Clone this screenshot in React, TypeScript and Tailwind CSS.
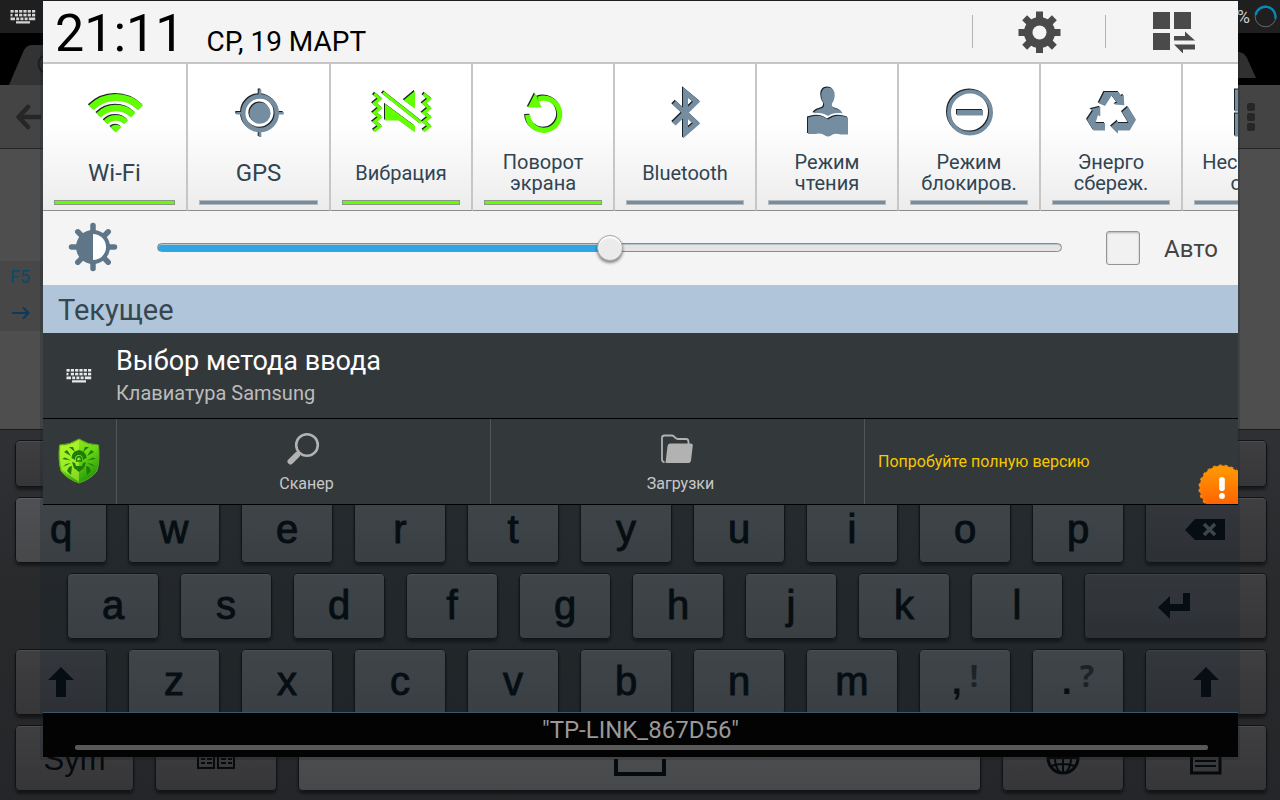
import { useState, type CSSProperties, type ReactNode } from "react";

const KEY_BASE =
  "flex items-center justify-center rounded-[5px] font-['Liberation_Sans',Arial,sans-serif] text-[40px] leading-none text-[#050a0d] shadow-[0_3px_3px_rgba(0,0,0,0.45),inset_0_0_0_1px_#101214,inset_0_2px_0_rgba(255,255,255,0.08)]";
const LIGHT = "bg-linear-to-b from-[#4e5053] to-[#46484a]";
const DARK = "bg-linear-to-b from-[#3f3f42] to-[#363639]";

function Key({ size = "flex-[92_1_0px]", dark = false, label, children }: { size?: string; dark?: boolean; label?: string; children?: ReactNode }) {
  return (
    <button type="button" aria-label={label} className={`${KEY_BASE} ${size} ${dark ? DARK : LIGHT}`}>
      {children}
    </button>
  );
}

function Letter({ char }: { char: string }) {
  return (
    <Key>
      <span className="pb-0.5 [-webkit-text-stroke:1px_#050a0d]">{char}</span>
    </Key>
  );
}

function PunctuationKey({ main, alt }: { main: string; alt: string }) {
  return (
    <Key>
      <span className="flex items-center gap-2">
        <span className="text-[36px] font-bold">{main}</span>
        <span className="pb-3 font-['Open_Sans',sans-serif] text-[30px] font-bold text-[#1f2427]">{alt}</span>
      </span>
    </Key>
  );
}

function ShiftIcon() {
  return (
    <svg width="28" height="32" viewBox="0 0 28 32" fill="#050a0d">
      <path d="M14 1 27 14H19V31H9V14H1Z" />
    </svg>
  );
}

function KeyboardGlyph({ color }: { color: string }) {
  return (
    <svg width="26" height="16" viewBox="0 0 26 16" fill={color}>
      {[0, 1, 2, 3, 4, 5].map((i) => (
        <rect key={`a${i}`} x={0.5 + i * 4.3} y="1" width="3.2" height="2.6" />
      ))}
      {[0, 1, 2, 3, 4, 5].map((i) => (
        <rect key={`b${i}`} x={0.5 + i * 4.3} y="4.8" width={i === 0 ? 2 : 3.2} height="2.6" />
      ))}
      <path d="M.5 8.6h4.5v2.6H.5zM6.2 8.6h3v2.6h-3zM10.4 8.6h3v2.6h-3zM14.6 8.6h3v2.6h-3zM18.8 8.6h6.4v2.6h-6.4zM6 12.2h14v2.4H6z" />
    </svg>
  );
}

function Backdrop() {
  return (
    <div className="flex min-h-screen flex-col bg-[#4e4e4e]">
      <div className="flex h-[33px] items-center justify-between bg-[#1f1f1f] pl-[10px] pr-[3px]">
        <KeyboardGlyph color="#d4d4d4" />
        <div className="flex items-center gap-1 text-[18px] text-[#d0d0d0]">
          <span>%</span>
          <svg width="23" height="23" viewBox="0 0 23 23" fill="none">
            <circle cx="11.5" cy="11.5" r="10.3" stroke="#6a6a6a" />
            <path d="M1.6 10A10 10 0 0 1 21.3 13.5" stroke="#0a86b5" strokeWidth="2.4" />
          </svg>
        </div>
      </div>
      <div className="flex h-[52px] items-end justify-between bg-black pl-[9px] pr-[24px]">
        <svg width="110" height="41" viewBox="0 0 110 41">
          <path d="M0 41 15 6Q18 1 23 1H110V41Z" fill="#333" />
          <circle cx="39" cy="20" r="9.5" fill="none" stroke="#1d1d1d" strokeWidth="2" />
        </svg>
        <svg width="80" height="33" viewBox="0 0 80 33">
          <path d="M0 0H62Q68 0 71 6L80 26H0Z" fill="#303030" />
        </svg>
      </div>
      <div className="flex h-[64px] items-center justify-between border-b border-[#262626] bg-[#444] pl-[15px] pr-[24px]">
        <svg width="26" height="26" viewBox="0 0 26 26" fill="none" stroke="#262626" strokeWidth="4.5">
          <path d="M13 3 3.5 13 13 23M4 13H26" strokeLinecap="round" strokeLinejoin="round" />
        </svg>
        <svg width="10" height="30" viewBox="0 0 10 30" fill="#262626">
          <rect x="1" y="1" width="8" height="8" rx="2" />
          <rect x="1" y="11" width="8" height="8" rx="2" />
          <rect x="1" y="21" width="8" height="8" rx="2" />
        </svg>
      </div>
      <div className="flex-1 pt-[112px]">
        <div className="flex h-[70px] w-[60px] flex-col gap-1 bg-[#474747] pl-[10px] pt-1 text-[#0d4866]">
          <span className="text-[18px] leading-6">F5</span>
          <svg width="20" height="36" viewBox="0 0 20 36" fill="none" stroke="#0b3a60" strokeWidth="2">
            <path d="M2 20H18M13 14.5 18.5 20 13 25.5" />
          </svg>
        </div>
      </div>
      <div className="flex flex-col gap-[10px] border-t border-[#1a1b1c] bg-linear-to-b from-[#303134] via-[#28292b] to-[#252629] pb-[9px] pl-[15px] pr-[13px] pt-[10px]">
        <div className="flex h-[47px] gap-[21px]">
          {"1234567890".split("").map((n) => (
            <Key key={n} dark label={n} />
          ))}
          <Key size="flex-[122_1_0px]" dark label="Delete" />
        </div>
        <div className="flex h-[66px] gap-[21px]">
          {"qwertyuiop".split("").map((c) => (
            <Letter key={c} char={c} />
          ))}
          <Key size="flex-[122_1_0px]" dark label="Backspace">
            <svg width="42" height="24" viewBox="0 0 42 24">
              <path d="M0 12 10 1H40V22H10Z" fill="#050a0d" />
              <path d="m19 6 11 11M30 6 19 17" stroke="#4b5053" strokeWidth="3.5" />
            </svg>
          </Key>
        </div>
        <div className="flex h-[66px] gap-[21px] pl-[52px]">
          {"asdfghjkl".split("").map((c) => (
            <Letter key={c} char={c} />
          ))}
          <Key size="flex-[183_1_0px]" dark label="Enter">
            <svg width="36" height="28" viewBox="1 0 36 28" fill="#050a0d">
              <path d="M26 1H33V19H13V27L1 15.500 13 4V12H26Z" />
            </svg>
          </Key>
        </div>
        <div className="flex h-[66px] gap-[21px]">
          <Key dark label="Shift">
            <ShiftIcon />
          </Key>
          {"zxcvbnm".split("").map((c) => (
            <Letter key={c} char={c} />
          ))}
          <PunctuationKey main="," alt="!" />
          <PunctuationKey main="." alt="?" />
          <Key size="flex-[122_1_0px]" dark label="Right shift">
            <ShiftIcon />
          </Key>
        </div>
        <div className="flex h-[66px] gap-[21px]">
          <Key size="flex-[119_1_0px]" dark>
            <span className="pt-0.5 text-[31px]">Sym</span>
          </Key>
          <Key size="flex-[122_1_0px]" dark label="Keyboard layout">
            <svg width="40" height="24" viewBox="0 0 40 24" fill="none" stroke="#050a0d" strokeWidth="2">
              <path d="M2 2H18V22H2ZM22 2H38V22H22ZM5 9H16M5 13H9M11 13H16M5 17H9M11 17H16M25 9H36M25 13H30M32 13H36M25 17H30M32 17H36" />
            </svg>
          </Key>
          <Key size="flex-[683_1_0px]" label="Space">
            <svg width="52" height="36" viewBox="0 0 52 36" fill="none" stroke="#050a0d" strokeWidth="4">
              <path d="M2 19V34H50V19" />
            </svg>
          </Key>
          <Key size="flex-[122_1_0px]" dark label="Language">
            <svg width="34" height="34" viewBox="0 0 34 34" fill="none" stroke="#050a0d" strokeWidth="2">
              <circle cx="17" cy="17" r="15" strokeWidth="3" />
              <ellipse cx="17" cy="17" rx="8" ry="15" />
              <path d="M17 2V32M2 17H32M5 9Q17 13 29 9M5 25Q17 21 29 25" />
            </svg>
          </Key>
          <Key size="flex-[122_1_0px]" dark label="Menu">
            <svg width="32" height="34" viewBox="0 0 32 34" fill="none" stroke="#050a0d" strokeWidth="3">
              <path d="M1.500 1.500H30V32H1.500Z" />
              <path d="M5 9H26M5 14H26M5 20H26M5 25H26" strokeWidth="2" />
            </svg>
          </Key>
        </div>
      </div>
    </div>
  );
}

const icons: Record<string, ReactNode> = {
  wifi: (
    <>
      <g fill="none" stroke="currentColor">
        <path d="M7.300 23.300A35 35 0 0 1 56.700 23.300" strokeWidth="7" />
        <path d="M14.700 30.700A24.500 24.500 0 0 1 49.300 30.700" strokeWidth="6.400" />
        <path d="M21.700 37.700A14.500 14.500 0 0 1 42.300 37.700" strokeWidth="5.600" />
      </g>
      <path d="M32 48 26.500 42.500A8 8 0 0 1 37.500 42.500Z" />
    </>
  ),
  gps: (
    <>
      <circle cx="32" cy="28.700" r="16.800" fill="none" stroke="currentColor" strokeWidth="4.500" />
      <circle cx="32" cy="28.700" r="10.600" />
      <path d="M30.700 5h2.600v6h-2.600zM30.700 46.500h2.600v6h-2.600zM8.300 27.400h6v2.600h-6zM49.700 27.400h6v2.600h-6z" />
    </>
  ),
  vibration: (
    <>
      <g fill="none" stroke="currentColor" strokeWidth="3.200">
        <path d="M4 9.500 10 14.300 4.500 18.800 10 23.600 4.500 28.200 10 32.700 4.500 37.200 10 41.700 4 46.500" />
        <path d="M53.500 9.500 59.500 14.300 54 18.800 59.500 23.600 54 28.200 59.500 32.700 54 37.200 59.500 41.700 53.500 46.500" />
        <path d="M13 8 51 38" />
      </g>
      <path d="M33.700 15.700 45 6.300V24ZM15 19.300V36H29L45 47.700V41.500Z" />
    </>
  ),
  rotation: (
    <>
      <path d="M15.700 30.300A16 16 0 1 0 26 14.800" fill="none" stroke="currentColor" strokeWidth="5.200" />
      <path d="M23 8.700 15.700 23H29.700Z" />
    </>
  ),
  bluetooth: (
    <path d="M20 18 42.500 39 31.500 48.500V8L42.500 17.200 20 39.300" fill="none" stroke="currentColor" strokeWidth="5" />
  ),
  reading: (
    <>
      <path d="M32 3C36.500 3 39 6.500 38.700 11 38.500 15 37 17.500 36 19 35.500 22.500 37 23.500 40.500 24.500 44 25.500 46 27 46.500 29 40 28 35.500 29 32 31.500 28.500 29 24 28 17.500 29 18 27 20 25.500 23.500 24.500 27 23.500 28.500 22.500 28 19 27 17.500 25.500 15 25.300 11 25 6.500 27.500 3 32 3Z" />
      <path d="M12 33Q24 28.500 32 35 40 28.500 52 33V50H45Q38 48 35 51 32 53 29 51 26 48 19 49.500H12Z" />
    </>
  ),
  block: (
    <>
      <circle cx="32" cy="28" r="21" fill="none" stroke="currentColor" strokeWidth="4" />
      <path d="M19 25.500H45V31H19Z" />
    </>
  ),
  power: (
    <>
      <path d="M18.700 18.700 24.300 7.500H38.700L41.200 11.500 43.700 10.300 44.300 20.700 34.300 20 37 18 31.700 11 25 21.500Z" />
      <path d="M20.300 22.300 10.300 24.700 13 26.300 7 35.300 13.700 46H25V38.500H15.500L18 30.500 20.300 32Z" />
      <path d="M48 22.300 56 35.300 49.700 46H38V49L31 42 38 36V38.500H48.500L42 27.500Z" />
    </>
  ),
  windows: (
    <path
      d="M15 7H31V25H15ZM35 7H51V25H35ZM15 31H31V50H15ZM35 31H51V50H35Z"
      fill="none"
      stroke="currentColor"
      strokeWidth="4"
    />
  ),
};

const tiles = [
  { icon: "wifi", label: "Wi-Fi", on: true, width: "w-[145px]", text: "text-[24px]" },
  { icon: "gps", label: "GPS", on: false, width: "w-[143px]", text: "text-[24px]" },
  { icon: "vibration", label: "Вибрация", on: true, width: "w-[142px]", text: "text-[20px]" },
  { icon: "rotation", label: "Поворот экрана", on: true, width: "w-[142px]", text: "text-[20px]" },
  { icon: "bluetooth", label: "Bluetooth", on: false, width: "w-[142px]", text: "text-[20px]" },
  { icon: "reading", label: "Режим чтения", on: false, width: "w-[142px]", text: "text-[20px]" },
  { icon: "block", label: "Режим блокиров.", on: false, width: "w-[142px]", text: "text-[20px]" },
  { icon: "power", label: "Энерго сбереж.", on: false, width: "w-[142px]", text: "text-[20px]" },
  { icon: "windows", label: "Несколько окон", on: false, width: "w-[142px]", text: "text-[20px]" },
];

function Tile({ icon, label, on, width, text }: (typeof tiles)[number]) {
  return (
    <button
      type="button"
      aria-pressed={on}
      className={`${width} flex shrink-0 flex-col border-b border-r-2 border-b-[#8c8c8c] border-r-[#c6c6c6] bg-linear-to-b from-white from-40% to-[#ececec] px-[11px] pb-[5px] pt-5`}
    >
      <svg
        viewBox="-1 -0.5 64 56"
        className={`h-14 w-16 self-center fill-current drop-shadow-[-1px_-1px_0_#1b2226] ${on ? "text-[#61ff00]" : "text-[#758da0]"}`}
      >
        {icons[icon]}
      </svg>
      <span className={`mt-3 flex h-[42px] items-center justify-center text-center leading-[21px] text-[#304452] ${text}`}>
        <span>
          {label.split(" ").map((word) => (
            <span key={word} className="block">
              {word}
            </span>
          ))}
        </span>
      </span>
      <span className={`mt-[6px] h-[5px] w-full border ${on ? "border-[#8e948a] bg-[#61ff00]" : "border-[#b5b9bc] bg-[#758da0]"}`} />
    </button>
  );
}

function Header() {
  return (
    <header className="flex h-[63px] items-center border-b-2 border-[#c6c6c6] bg-[#f4f4f4] pl-3 pr-[43px] text-black">
      <time className="flex flex-1 items-baseline gap-[22px] pt-1">
        <span className="text-[52px] leading-[60px]">21:11</span>
        <span className="text-[28px]">СР, 19 МАРТ</span>
      </time>
      <span className="h-[33px] w-px bg-[#b4b4b4]" />
      <button type="button" aria-label="Настройки" className="ml-[45px] mr-11">
        <svg width="43" height="42" viewBox="-21.5 -21.5 43 42">
          {[0, 45, 90, 135].map((a) => (
            <rect key={a} x="-3.500" y="-21" width="7" height="42" fill="#4a4a4a" transform={`rotate(${a})`} />
          ))}
          <circle r="15.500" fill="#4a4a4a" />
          <circle r="7" fill="#f4f4f4" />
        </svg>
      </button>
      <span className="h-[33px] w-px bg-[#b4b4b4]" />
      <button type="button" aria-label="Панель" className="ml-[47px]">
        <svg width="42" height="42" viewBox="0 -1 42 42" fill="#4a4a4a">
          <path d="M0 0H17V17H0ZM21 0H38V17H21ZM0 21H17V38H0Z" />
          <path d="M21 24H32V19.500L42 28.500H21ZM42 37.500H30V41.500L21 32.500H42Z" />
        </svg>
      </button>
    </header>
  );
}

function Brightness() {
  const [value, setValue] = useState(50);
  const [auto, setAuto] = useState(false);
  return (
    <div className="flex h-[74px] items-center bg-[#f4f4f4] pl-[25px] pr-5">
      <svg width="50" height="50" viewBox="-25 -25 50 50" className="mb-0.5 shrink-0">
        {[0, 45, 90, 135].map((a) => (
          <path key={a} d="M0-21.500V-15M0 15V21.500" stroke="#5f7588" strokeWidth="5.500" strokeLinecap="round" transform={`rotate(${a})`} />
        ))}
        <circle r="17" fill="#5f7588" />
        <path d="M0-13A13 13 0 0 1 0 13Z" fill="#fff" />
      </svg>
      <input
        type="range"
        aria-label="Яркость"
        value={value}
        onChange={(e) => setValue(Number(e.target.value))}
        style={{ "--fill": `${value}%` } as CSSProperties}
        className="mb-0.5 ml-[39px] h-8 min-w-0 flex-1 appearance-none bg-transparent [&::-webkit-slider-runnable-track]:h-[9px] [&::-webkit-slider-runnable-track]:rounded-full [&::-webkit-slider-runnable-track]:border [&::-webkit-slider-runnable-track]:border-[#8a8a8a] [&::-webkit-slider-runnable-track]:bg-[linear-gradient(to_right,#2ea5e4_var(--fill),#e4e4e4_var(--fill))] [&::-webkit-slider-runnable-track]:shadow-[inset_0_1px_0_#b5c3cb] [&::-webkit-slider-thumb]:mt-[-9px] [&::-webkit-slider-thumb]:size-[26px] [&::-webkit-slider-thumb]:appearance-none [&::-webkit-slider-thumb]:rounded-full [&::-webkit-slider-thumb]:border [&::-webkit-slider-thumb]:border-[#a9a9a9] [&::-webkit-slider-thumb]:bg-[#ebebeb] [&::-webkit-slider-thumb]:shadow-[0_2px_3px_rgba(0,0,0,0.45),inset_0_2px_1px_#fff]"
      />
      <label className="ml-[44px] flex items-center gap-6 text-[24px] text-[#444]">
        <input
          type="checkbox"
          checked={auto}
          onChange={(e) => setAuto(e.target.checked)}
          className="size-[34px] appearance-none rounded-[3px] border border-[#939393] bg-[#f1f1f1] shadow-[inset_0_1px_2px_rgba(0,0,0,0.25)] checked:bg-[#2ea5e4]"
        />
        <span className="pt-0.5">Авто</span>
      </label>
    </div>
  );
}

function ShieldIcon() {
  return (
    <svg width="42" height="46" viewBox="0 0 42 46">
      <defs>
        <linearGradient id="shield" x1="0" y1="0" x2="0.600" y2="1">
          <stop offset="0" stopColor="#a4ee18" />
          <stop offset="0.550" stopColor="#6bd814" />
          <stop offset="1" stopColor="#259a08" />
        </linearGradient>
      </defs>
      <path d="M21 1Q30 7 40.500 7 42 23 39 33 33 41 21 45 9 41 3 33 0 23 1.500 7 12 7 21 1Z" fill="url(#shield)" stroke="#5fae18" />
      <path d="M21 2Q12 8 2.500 8 1.500 23 4 32L21 44Z" fill="#ccff3a" opacity="0.500" />
      <g fill="#1d7d08">
        <path d="M11 9H15L17 14ZM31 9H27L25 14ZM6 14 9 12 13 18ZM36 14 33 12 29 18ZM4 21 7 19.500 13 22.500ZM38 21 35 19.500 29 22.500ZM5 29 8 26 13 25ZM37 29 34 26 29 25ZM9 33 11 29 14 28 13 37ZM33 33 31 29 28 28 29 37Z" />
        <path d="M21 12Q28 13 28.500 20L25 22Q25 17 21 17 17 17 17 22L13.500 20Q14 13 21 12Z" />
        <path d="M14 24 17 25 18 28H24L25 25 28 24 26 30 21 34 16 30Z" />
      </g>
      <path d="M21 18.500Q24 19 23.500 23H18.500Q18 19 21 18.500Z" fill="none" stroke="#1d7d08" strokeWidth="1.300" />
    </svg>
  );
}

function Notifications() {
  return (
    <section>
      <h2 className="flex h-12 items-center bg-[#b1c5da] pl-[15px] pt-1 text-[29px] text-[#36474f]">Текущее</h2>
      <article className="flex h-[86px] items-center border-b border-black bg-[#33383b]">
        <div className="flex w-[72px] justify-center">
          <KeyboardGlyph color="#e8e8e8" />
        </div>
        <div className="pb-0.5 pl-px">
          <h3 className="text-[27px] leading-9 text-white">Выбор метода ввода</h3>
          <p className="text-[20px] leading-7 text-[#bcbcbc]">Клавиатура Samsung</p>
        </div>
      </article>
      <article className="flex h-[86px] border-b border-black bg-[#33383b] text-[16px] text-[#c8c8c8]">
        <div className="flex w-[73px] items-center justify-center pb-0.5 pr-0.5">
          <ShieldIcon />
        </div>
        <div className="grid flex-1 grid-cols-3">
          <button type="button" className="flex flex-col items-center gap-[7px] border-l border-[#525557] pt-3">
            <svg width="34" height="34" viewBox="1 -0.5 34 34" fill="none" stroke="#b2b2b2">
              <circle cx="21" cy="13.500" r="10.800" strokeWidth="2.600" />
              <path d="M11 23.500 4.500 30" strokeWidth="6" strokeLinecap="round" />
            </svg>
            <span className="pl-1.5 leading-6">Сканер</span>
          </button>
          <button type="button" className="flex flex-col items-center gap-[7px] border-l border-[#525557] pt-3">
            <svg width="34" height="34" viewBox="1 0 34 34">
              <path d="M4.500 31Q2 31 2 28.500V7Q2 4.500 4.500 4.500H12Q13.500 4.500 15 6.500 16.500 8 18 8H26Q28.500 8 28.500 11V13" fill="none" stroke="#b2b2b2" strokeWidth="1.800" />
              <path d="M10 12.500H31Q33 12.500 32.800 14.500L31 29.500Q30.600 32 28.500 32H5.500Q6 28 7.500 15 8 12.500 10 12.500Z" fill="#b2b2b2" />
            </svg>
            <span className="pl-1.5 leading-6">Загрузки</span>
          </button>
          <div className="relative flex items-center overflow-hidden border-l border-[#525557] pl-[13px] text-[#f6c800]">
            <a href="#full">Попробуйте полную версию</a>
            <svg width="40" height="40" viewBox="0 0 40 40" className="absolute bottom-0 right-0">
              <defs>
                <linearGradient id="alert" x1="0" y1="0" x2="0" y2="1">
                  <stop offset="0" stopColor="#ff9c00" />
                  <stop offset="1" stopColor="#ff5a00" />
                </linearGradient>
              </defs>
              <circle cx="24" cy="24" r="22.500" fill="url(#alert)" />
              <circle cx="24" cy="24" r="22.500" fill="none" stroke="#ff8a00" strokeWidth="2" strokeDasharray="3 3" />
              <rect x="21.200" y="13" width="5.600" height="14" rx="2.800" fill="#fff" />
              <circle cx="24" cy="32" r="2.900" fill="#fff" />
            </svg>
          </div>
        </div>
      </article>
    </section>
  );
}

export default function App() {
  return (
    <main className="relative min-h-screen overflow-hidden font-[Roboto,sans-serif]">
      <Backdrop />
      <div className="absolute inset-x-[40px] bottom-[40px] top-0 bg-[#0c1e2a]/22" />
      <div className="absolute bottom-[43px] left-[43px] right-[42px] top-px flex flex-col">
        <Header />
        <div className="flex overflow-hidden bg-[#f4f4f4]">
          {tiles.map((tile) => (
            <Tile key={tile.icon} {...tile} />
          ))}
        </div>
        <Brightness />
        <Notifications />
        <div className="flex-1" />
        <footer className="flex h-[45px] flex-col border-t border-[#3c566b] bg-[#030303]">
          <p className="pt-[2px] text-center text-[24px] leading-[30px] text-[#999]">"TP-LINK_867D56"</p>
          <div className="ml-8 mr-[30px] h-[5px] rounded-xs bg-[#585858]" />
        </footer>
      </div>
    </main>
  );
}
